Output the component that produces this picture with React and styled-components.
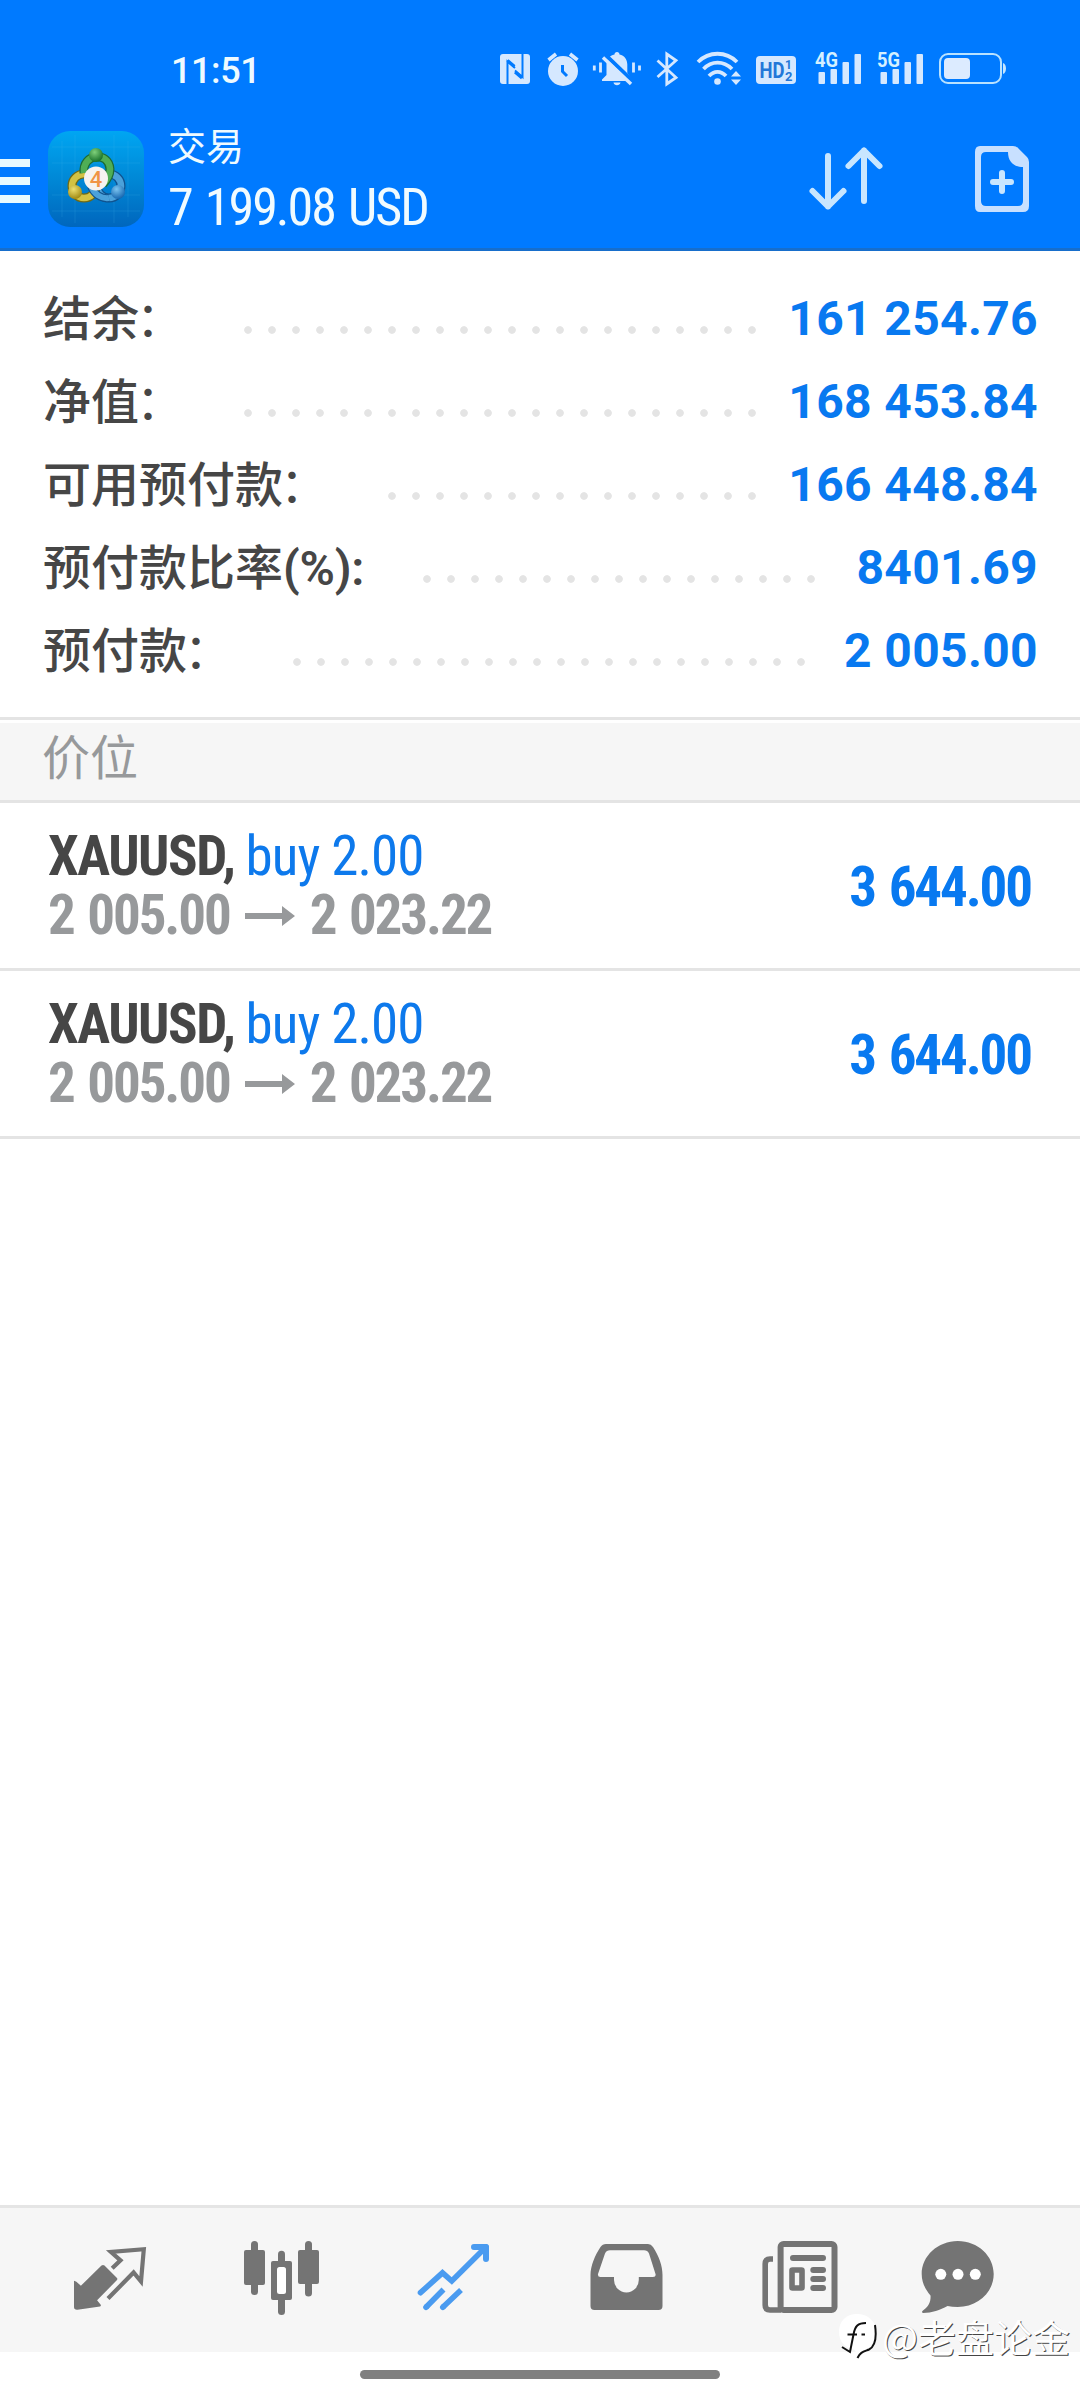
import React from "react";
import styled, { createGlobalStyle } from "styled-components";

const GlobalStyle = createGlobalStyle`
  * {
    box-sizing: border-box;
  }

  body {
    margin: 0;
    background: #fff;
    font-family: Roboto, "Noto Sans CJK SC", sans-serif;
  }
`;

const condensed = `"Roboto Condensed", Roboto, "Noto Sans CJK SC", sans-serif`;

const Screen = styled.div`
  position: relative;
  display: flex;
  flex-direction: column;
  width: 1080px;
  height: 2400px;
  overflow: hidden;
  background: #fff;
`;

const Header = styled.header`
  height: 251px;
  background: #007aff;
  border-bottom: 3px solid #176ecb;
`;

const StatusBar = styled.div`
  display: flex;
  align-items: flex-start;
  justify-content: space-between;
  height: 120px;
  padding: 51px 74px 0 171px;
`;

const Clock = styled.div`
  padding-top: 1px;
  font-size: 36px;
  font-weight: 500;
  line-height: 38px;
  letter-spacing: -0.4px;
  color: #eefaff;
`;

const StatusIcons = styled.div`
  display: flex;
  gap: 14px;

  svg {
    display: block;
    overflow: visible;
  }
`;

const TitleBar = styled.div`
  display: flex;
  align-items: flex-start;
  height: 128px;
`;

const MenuButton = styled.div`
  display: flex;
  flex-direction: column;
  gap: 10px;
  width: 30px;
  margin-top: 39px;

  span {
    height: 8px;
    background: #e8faff;
  }
`;

const AppLogo = styled.svg`
  display: block;
  margin: 11px 0 0 18px;
`;

const Titles = styled.div`
  flex: 1;
  margin-left: 24px;
  color: #f0fbff;
`;

const PageTitle = styled.div`
  font-size: 38px;
  line-height: 54px;
`;

const Profit = styled.div`
  font-family: ${condensed};
  font-size: 52px;
  line-height: 68px;
  letter-spacing: -1.95px;
  word-spacing: 3px;
  white-space: nowrap;
`;

const Actions = styled.div`
  display: flex;
  gap: 88px;
  margin: 23px 45px 0 0;

  svg {
    display: block;
  }
`;

const Summary = styled.section`
  height: 466px;
  padding: 25px 42px 0 43px;
`;

const SummaryRow = styled.div`
  display: flex;
  align-items: center;
  height: 83px;
`;

const Label = styled.div`
  padding-top: 4px;
  font-size: 48px;
  font-weight: 500;
  line-height: 83px;
  white-space: nowrap;
  color: #464646;

  span {
    margin-left: -3px;
    font-weight: 400;
  }

  b {
    font-weight: 600;
    letter-spacing: -0.2px;
  }
`;

const Leader = styled.div`
  width: ${({ $dots }) => $dots * 24}px;
  height: 8px;
  margin: 25px ${({ $gap }) => $gap}px 0 auto;
  background: radial-gradient(circle at 12px 4px, #e4e4e4 3.4px, transparent 4.2px) 0 0 / 24px 8px repeat-x;
`;

const Value = styled.div`
  padding-top: 2px;
  font-size: 48px;
  font-weight: 700;
  line-height: 83px;
  letter-spacing: 0.35px;
  white-space: pre;
  color: #0879f0;
`;

const SectionHead = styled.div`
  height: 86px;
  padding-left: 42px;
  border-top: 3px solid #e4e4e4;
  border-bottom: 3px solid #e4e4e4;
  background: linear-gradient(#fff 3px, #f6f6f6 3px);
  font-size: 48px;
  line-height: 78px;
  color: #97999b;
`;

const Position = styled.div`
  display: flex;
  align-items: center;
  justify-content: space-between;
  height: 168px;
  padding: 0 49px 0 48px;
  border-bottom: 3px solid #e4e4e4;
  font-family: ${condensed};
  font-size: 55px;
  font-weight: 700;
  line-height: 59px;
  letter-spacing: -2.1px;
  word-spacing: 3px;
  white-space: pre;
`;

const Symbol = styled.div`
  padding-top: 1px;
  letter-spacing: -1.5px;
  word-spacing: 0;
  color: #464646;
`;

const Side = styled.span`
  font-weight: 400;
  letter-spacing: -0.9px;
  color: #0d79ec;
`;

const Prices = styled.div`
  display: flex;
  align-items: center;
  gap: 15px;
  color: #97999b;
`;

const PositionProfit = styled.div`
  padding-top: 3px;
  color: #0879f0;
`;

const NavBar = styled.nav`
  display: flex;
  align-items: center;
  height: 147px;
  margin-top: auto;
  padding: 0 24px;
  border-top: 3px solid #e5e5e5;
  background: #f6f6f6;
`;

const NavItem = styled.div`
  display: flex;
  justify-content: center;
  width: 172px;
  color: ${({ $active }) => ($active ? "#4a9bf0" : "#747474")};

  svg {
    display: block;
    overflow: visible;
  }
`;

const GestureArea = styled.div`
  display: flex;
  justify-content: center;
  height: 48px;
  padding-top: 18px;
`;

const GestureBar = styled.div`
  width: 360px;
  height: 9px;
  border-radius: 5px;
  background: #808080;
`;

const Watermark = styled.div`
  position: absolute;
  right: 10px;
  bottom: 39px;
  display: flex;
  align-items: center;
  gap: 4px;
  font-family: "Noto Sans CJK SC", sans-serif;
  font-size: 38px;
  line-height: 50px;
  color: #fff;
  text-shadow: 1px 1px 0 #444;
`;

const NfcIcon = () => (
  <svg width="33" height="36" viewBox="500 51 33 36">
    <rect x="500" y="54" width="30" height="30" rx="3" fill="#d5e8ff" />
    <path d="M507.5 84V61.5L515 68M522.500 54V77L515 70.500" fill="none" stroke="#007aff" strokeWidth="2" />
    <path d="M507.500 60.500L514.500 66.500M515 72L522 78" fill="none" stroke="#007aff" strokeWidth="3" />
  </svg>
);

const AlarmIcon = () => (
  <svg width="32" height="36" viewBox="547 51 32 36">
    <circle cx="563" cy="71" r="15" fill="#d5e8ff" />
    <path d="M548.500 60L556 54M570 54L577.500 60" stroke="#d5e8ff" strokeWidth="3.600" />
    <path d="M562.500 65V71.500L567 76" fill="none" stroke="#007aff" strokeWidth="3" />
  </svg>
);

const SilentIcon = () => (
  <svg width="49" height="36" viewBox="593 51 49 36">
    <path d="M617 52c1.500 0 2.500 1 2.500 2.600 5 1.200 7.800 5 7.800 10V73l4.700 6.500v1.500h-30v-1.500l4.500-4.500V64.600c0-5 3-8.800 8-10C614.500 53 615.500 52 617 52zM613.500 82.500h7c-.5 3.500-6.500 3.500-7 0z" fill="#d5e8ff" />
    <path d="M605.500 55L633.500 82" stroke="#007aff" strokeWidth="4" />
    <path d="M603 57.500L631 84" stroke="#d5e8ff" strokeWidth="3.400" />
    <path d="M594.300 65.500v5M600.500 62.500v10M633.500 62.500v10M639.500 65.500v5" stroke="#d5e8ff" strokeWidth="2.800" />
  </svg>
);

const BluetoothIcon = () => (
  <svg width="27" height="36" viewBox="656 51 27 36">
    <path d="M657.500 60.500L676 77.500L666.800 84V54L676 60.500L657.500 77" fill="none" stroke="#d5e8ff" strokeWidth="2.800" />
  </svg>
);

const WifiIcon = () => (
  <svg width="45" height="36" viewBox="697 51 45 36">
    <g fill="none" stroke="#d5e8ff" strokeWidth="3.800">
      <path d="M698 62c11-11 28-11 39 0" />
      <path d="M703.500 69c8-8.500 20-8.500 28.500 0" />
      <path d="M709 76c5-5.500 12-5.500 17 0" />
    </g>
    <circle cx="717.500" cy="81.500" r="3.300" fill="#d5e8ff" />
    <path d="M731 76.500l5-5.500l5 5.500zM731 79.500h10l-5 5.500z" fill="#d5e8ff" />
  </svg>
);

const HdIcon = () => (
  <svg width="45" height="36" viewBox="756 51 45 36">
    <rect x="756" y="56" width="40" height="28" rx="4" fill="#d5e8ff" />
    <g fill="#2277d8" fontFamily="Roboto, sans-serif" fontWeight="700">
      <text x="759.500" y="78" fontSize="22" textLength="25" lengthAdjust="spacingAndGlyphs">HD</text>
      <text x="785" y="69" fontSize="12">1</text>
      <text x="785" y="80.500" fontSize="13">2</text>
    </g>
  </svg>
);

const SignalIcon = ({ network }) => (
  <svg width="48" height="36" viewBox="0 0 48 36">
    <text x="0" y="16" fontSize="20" fontWeight="700" fontFamily="Roboto, sans-serif" fill="#d5f0ff" textLength="23" lengthAdjust="spacingAndGlyphs">
      {network}
    </text>
    <g fill="#d5e8ff">
      <rect x="3.500" y="21" width="6.500" height="12" rx="1" />
      <rect x="15.500" y="18" width="6.500" height="15" rx="1" />
      <rect x="27.500" y="11" width="6.500" height="22" rx="1" />
      <rect x="39.500" y="3" width="6.500" height="30" rx="1" />
    </g>
  </svg>
);

const BatteryIcon = () => (
  <svg width="67" height="36" viewBox="940 51 67 36">
    <rect x="941" y="54" width="61" height="29" rx="8" fill="none" stroke="#b9e2ff" strokeWidth="2" />
    <rect x="945" y="58" width="26" height="21" rx="4" fill="#dcebff" />
    <path d="M1004 63c4 1 4 10 0 11z" fill="#c5e6ff" />
  </svg>
);

const Logo = () => (
  <AppLogo width="96" height="96" viewBox="0 0 96 96">
    <defs>
      <linearGradient id="tile" x1="0" y1="0" x2="0" y2="1">
        <stop offset="0" stopColor="#00a6f2" />
        <stop offset="0.5" stopColor="#0088d6" />
        <stop offset="1" stopColor="#0066bd" />
      </linearGradient>
      <radialGradient id="green" cx="0.4" cy="0.3" r="0.7">
        <stop offset="0" stopColor="#7fd07a" />
        <stop offset="1" stopColor="#17702a" />
      </radialGradient>
      <radialGradient id="yellow" cx="0.4" cy="0.3" r="0.7">
        <stop offset="0" stopColor="#eee070" />
        <stop offset="1" stopColor="#a08a14" />
      </radialGradient>
      <radialGradient id="blue" cx="0.4" cy="0.3" r="0.7">
        <stop offset="0" stopColor="#7cc4f0" />
        <stop offset="1" stopColor="#1667b0" />
      </radialGradient>
    </defs>
    <rect width="96" height="96" rx="22" fill="url(#tile)" />
    <path d="M14 10v76M27 4v88M66 4v88M80 10v76M4 16h88M4 32h88M4 64h88M4 80h88" stroke="#4fc0f4" strokeOpacity="0.16" />
    <g fill="none">
      <circle cx="61" cy="55" r="12" stroke="#10528e" strokeWidth="9" />
      <circle cx="61" cy="55" r="12" stroke="#4ba1da" strokeWidth="6.500" />
      <circle cx="36" cy="55" r="12" stroke="#6f6a16" strokeWidth="9" />
      <circle cx="36" cy="55" r="12" stroke="#d3c243" strokeWidth="6.500" />
      <path d="M36 42C34 22 61 20 62 38C62 44 59 49 55 53" stroke="#1d6b35" strokeWidth="9" />
      <path d="M36 42C34 22 61 20 62 38C62 44 59 49 55 53" stroke="#4fae55" strokeWidth="6.500" />
      <path d="M43 55C46 63 53 68 61 67" stroke="#10528e" strokeWidth="8" />
      <path d="M43 55C46 63 53 68 61 67" stroke="#4ba1da" strokeWidth="6" />
    </g>
    <circle cx="48" cy="24" r="7" fill="url(#green)" />
    <circle cx="27" cy="61" r="7" fill="url(#yellow)" />
    <circle cx="70" cy="61" r="7" fill="url(#blue)" />
    <circle cx="48" cy="47.500" r="12" fill="#f6f3f0" />
    <text x="48" y="55.500" textAnchor="middle" fontFamily="Roboto, sans-serif" fontSize="22" fontWeight="500" fill="#f09445">4</text>
  </AppLogo>
);

const SortIcon = () => (
  <svg width="78" height="72" viewBox="808 143 78 72" fill="none" stroke="#c8e6ff" strokeWidth="6" strokeLinecap="round" strokeLinejoin="round">
    <path d="M828 156V206.500M812.500 191L828 206.500L843.500 191" />
    <path d="M864 201V150.500M848.500 166L864 150.500L879.500 166" />
  </svg>
);

const NewOrderIcon = () => (
  <svg width="61" height="72" viewBox="974 143 61 72">
    <path
      d="M980 146H1013Q1016 146 1018 148L1027 157Q1029 159 1029 162V206Q1029 212 1023 212H980Q975 212 975 206V152Q975 146 980 146zM986 152Q981 152 981 157V201Q981 206 986 206H1018Q1023 206 1023 201V167C1014 167 1008 162 1008 152z"
      fill="#c8e0ff"
      fillRule="evenodd"
    />
    <path d="M1002 173V191M993 182H1011" stroke="#c8e6ff" strokeWidth="6" strokeLinecap="round" />
  </svg>
);

const PriceArrow = () => (
  <svg width="50" height="20" viewBox="0 0 50 20" fill="#97999b">
    <path d="M0 7h37V0L50 10L37 20V13H0z" />
  </svg>
);

const QuotesIcon = () => (
  <svg width="84" height="84" viewBox="0 0 84 84">
    <path d="M6 42.700L8.400 43.700L12.900 47.700L33.500 27.600Q35 26.300 36.500 27.600L49 40Q49.700 41 49 42L29.100 62.300L32.900 67Q33 68.200 32 68.400L9.500 71.700Q6 72 6 69z" fill="currentColor" />
    <path d="M44.200 30.300L52.500 22.300L43 14L75.800 11.200L73 43.500L65.600 34.500L40 60.500" fill="none" stroke="currentColor" strokeWidth="4.200" />
  </svg>
);

const ChartIcon = () => (
  <svg width="84" height="84" viewBox="0 0 84 84" fill="currentColor">
    <rect x="11" y="3" width="7" height="54" rx="3.500" />
    <rect x="4" y="12" width="21" height="35" rx="2" />
    <rect x="38" y="12.700" width="7" height="64.300" rx="3.500" />
    <rect x="31" y="23" width="21" height="39" rx="2" />
    <rect x="37" y="29" width="9" height="27" rx="2.500" fill="#fff" />
    <rect x="65" y="3" width="7" height="55.500" rx="3.500" />
    <rect x="58" y="12" width="21" height="34" rx="2" />
  </svg>
);

const TradeIcon = () => (
  <svg width="84" height="84" viewBox="0 0 84 84" fill="none" stroke="currentColor" strokeWidth="5.600">
    <path d="M8.500 54.700L30.500 34.800L39.800 43L74 9" strokeLinecap="round" />
    <path d="M62 9H74V21" strokeWidth="6" strokeLinecap="round" strokeLinejoin="round" />
    <path d="M31.500 51.500L14 69.300M49 52L30.800 69.300" />
    <path d="M14.500 68.800l-.5.500M31.300 68.800l-.5.500" strokeLinecap="round" />
  </svg>
);

const HistoryIcon = () => (
  <svg width="84" height="84" viewBox="0 0 84 84">
    <path
      d="M22 6H64Q67 6 69 9C75 18 78.500 28 78.500 37V68Q78.500 72 74.500 72H10.500Q6.500 72 6.500 68V37C6.500 28 11 17 16.500 9Q18.500 6 22 6zM26 12.300Q22.500 12.300 21 15.500L14 36Q13.500 39 16.500 39H30V42A12.400 12.400 0 0 0 54.800 42V39H69Q72.300 39 71.500 36L65 15.500Q63.500 12.300 60 12.300z"
      fill="currentColor"
      fillRule="evenodd"
    />
  </svg>
);

const NewsIcon = () => (
  <svg width="84" height="84" viewBox="0 0 84 84" fill="none" stroke="currentColor">
    <rect x="24.600" y="6" width="53.900" height="66" rx="3" strokeWidth="6" />
    <path d="M17 21H14Q9.200 21 9.200 26V67Q9.200 72 14 72H25" strokeWidth="5.600" />
    <path d="M37 20H67M57.300 32H67M57.300 41H67M57.300 50H67" strokeWidth="6" strokeLinecap="round" />
    <rect x="36" y="32" width="10" height="18" rx="0.500" strokeWidth="5.600" strokeLinejoin="round" />
  </svg>
);

const ChatIcon = () => (
  <svg width="84" height="84" viewBox="0 0 84 84">
    <path d="M29.700 3C50 3 65.700 18 65.700 36S50 69 29.700 69Q24 69 19.500 68C12 72 4 75 -5 75Q-7 74 -5 72.500C1 68.500 3 63 2.500 57.500C-3 51 -6.300 44 -6.300 36C-6.300 18 10 3 29.700 3z" fill="currentColor" />
    <g fill="#fff">
      <circle cx="12.800" cy="36.300" r="5.500" />
      <circle cx="30" cy="36.300" r="5.500" />
      <circle cx="47.300" cy="36.300" r="5.500" />
    </g>
  </svg>
);

const WatermarkLogo = () => (
  <svg width="40" height="48" viewBox="0 0 40 48">
    <path d="M19 2C30 2 38 9 38 20C38 31 31 37 25 39L19.500 45L17 38C7 36 1 30 1 20C1 9 8 2 19 2z" fill="#fff" />
    <path d="M28 11C20 11 17 14 15.500 22.500L12 40L4 35M9.500 22.500H19M23.500 22.500H27" fill="none" stroke="#111" strokeWidth="2" />
    <path d="M37 13C39 27 36 35 31 37.500C26 39.500 22 40 19.500 46" fill="none" stroke="#111" strokeWidth="2" />
  </svg>
);

const summary = [
  { label: "结余", colon: "：", value: "161 254.76", dots: 22, gap: 24 },
  { label: "净值", colon: "：", value: "168 453.84", dots: 22, gap: 24 },
  { label: "可用预付款", colon: "：", value: "166 448.84", dots: 16, gap: 24 },
  { label: "预付款比率", unit: "(%):", value: "8401.69", dots: 17, gap: 33 },
  { label: "预付款", colon: "：", value: "2 005.00", dots: 22, gap: 31 },
];

const positions = [
  { id: 1, symbol: "XAUUSD", side: "buy 2.00", open: "2 005.00", current: "2 023.22", profit: "3 644.00" },
  { id: 2, symbol: "XAUUSD", side: "buy 2.00", open: "2 005.00", current: "2 023.22", profit: "3 644.00" },
];

const tabs = [
  { id: "quotes", Icon: QuotesIcon },
  { id: "chart", Icon: ChartIcon },
  { id: "trade", Icon: TradeIcon },
  { id: "history", Icon: HistoryIcon },
  { id: "news", Icon: NewsIcon },
  { id: "chat", Icon: ChatIcon },
];

const App = () => {
  return (
    <Screen>
      <GlobalStyle />
      <Header>
        <StatusBar>
          <Clock>11:51</Clock>
          <StatusIcons>
            <NfcIcon />
            <AlarmIcon />
            <SilentIcon />
            <BluetoothIcon />
            <WifiIcon />
            <HdIcon />
            <SignalIcon network="4G" />
            <SignalIcon network="5G" />
            <BatteryIcon />
          </StatusIcons>
        </StatusBar>
        <TitleBar>
          <MenuButton>
            <span />
            <span />
            <span />
          </MenuButton>
          <Logo />
          <Titles>
            <PageTitle>交易</PageTitle>
            <Profit>7 199.08 USD</Profit>
          </Titles>
          <Actions>
            <SortIcon />
            <NewOrderIcon />
          </Actions>
        </TitleBar>
      </Header>
      <Summary>
        {summary.map(({ label, colon, unit, value, dots, gap }) => (
          <SummaryRow key={label}>
            <Label>
              {label}
              {colon && <span>{colon}</span>}
              {unit && <b>{unit}</b>}
            </Label>
            <Leader $dots={dots} $gap={gap} />
            <Value>{value}</Value>
          </SummaryRow>
        ))}
      </Summary>
      <SectionHead>价位</SectionHead>
      {positions.map(({ id, symbol, side, open, current, profit }) => (
        <Position key={id}>
          <div>
            <Symbol>
              {symbol}, <Side>{side}</Side>
            </Symbol>
            <Prices>
              <span>{open}</span>
              <PriceArrow />
              <span>{current}</span>
            </Prices>
          </div>
          <PositionProfit>{profit}</PositionProfit>
        </Position>
      ))}
      <NavBar>
        {tabs.map(({ id, Icon }) => (
          <NavItem key={id} $active={id === "trade"}>
            <Icon />
          </NavItem>
        ))}
      </NavBar>
      <GestureArea>
        <GestureBar />
      </GestureArea>
      <Watermark>
        <WatermarkLogo />
        <span>@老盘论金</span>
      </Watermark>
    </Screen>
  );
};

export default App;
